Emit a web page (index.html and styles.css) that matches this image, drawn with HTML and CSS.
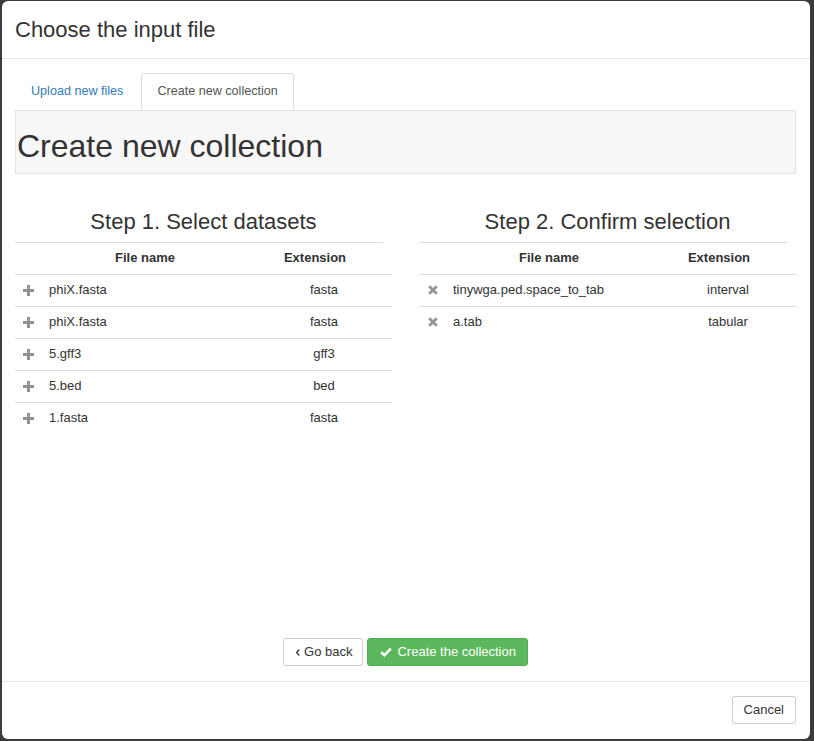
FILE: index.html
```html
<!DOCTYPE html>
<html>
<head>
<meta charset="utf-8">
<link rel="stylesheet" href="styles.css">
</head>
<body>
<div class="modal">
  <div class="modal-header">
    <h4 class="modal-title">Choose the input file</h4>
  </div>
  <div class="modal-body">
    <ul class="tabs">
      <li class="tab"><a class="tab-link">Upload new files</a></li>
      <li class="tab active"><a class="tab-link">Create new collection</a></li>
    </ul>
    <div class="well">
      <h1 class="well-title">Create new collection</h1>
    </div>
    <div class="steps">
      <div class="step">
        <h3 class="step-title">Step 1. Select datasets</h3>
        <table class="tbl tbl-head">
          <colgroup><col class="c-icon"><col><col class="c-ext"></colgroup>
          <tr><th></th><th>File name</th><th>Extension</th></tr>
        </table>
        <table class="tbl tbl-body">
          <colgroup><col class="c-icon"><col><col class="c-ext"></colgroup>
          <tr><td class="ic"><svg class="ico" width="11" height="11" viewBox="0 0 11 11"><rect x="4" y="0" width="3" height="11"/><rect x="0" y="4" width="11" height="3"/></svg></td><td>phiX.fasta</td><td class="ext">fasta</td></tr>
          <tr><td class="ic"><svg class="ico" width="11" height="11" viewBox="0 0 11 11"><rect x="4" y="0" width="3" height="11"/><rect x="0" y="4" width="11" height="3"/></svg></td><td>phiX.fasta</td><td class="ext">fasta</td></tr>
          <tr><td class="ic"><svg class="ico" width="11" height="11" viewBox="0 0 11 11"><rect x="4" y="0" width="3" height="11"/><rect x="0" y="4" width="11" height="3"/></svg></td><td>5.gff3</td><td class="ext">gff3</td></tr>
          <tr><td class="ic"><svg class="ico" width="11" height="11" viewBox="0 0 11 11"><rect x="4" y="0" width="3" height="11"/><rect x="0" y="4" width="11" height="3"/></svg></td><td>5.bed</td><td class="ext">bed</td></tr>
          <tr><td class="ic"><svg class="ico" width="11" height="11" viewBox="0 0 11 11"><rect x="4" y="0" width="3" height="11"/><rect x="0" y="4" width="11" height="3"/></svg></td><td>1.fasta</td><td class="ext">fasta</td></tr>
        </table>
      </div>
      <div class="step">
        <h3 class="step-title">Step 2. Confirm selection</h3>
        <table class="tbl tbl-head">
          <colgroup><col class="c-icon"><col><col class="c-ext"></colgroup>
          <tr><th></th><th>File name</th><th>Extension</th></tr>
        </table>
        <table class="tbl tbl-body">
          <colgroup><col class="c-icon"><col><col class="c-ext"></colgroup>
          <tr><td class="ic ic-x"><svg class="ico-x" width="10" height="10" viewBox="0 0 10 10"><path d="M1.2 1.2 L8.8 8.8 M8.8 1.2 L1.2 8.8"/></svg></td><td>tinywga.ped.space_to_tab</td><td class="ext">interval</td></tr>
          <tr><td class="ic ic-x"><svg class="ico-x" width="10" height="10" viewBox="0 0 10 10"><path d="M1.2 1.2 L8.8 8.8 M8.8 1.2 L1.2 8.8"/></svg></td><td>a.tab</td><td class="ext">tabular</td></tr>
        </table>
      </div>
    </div>
    <div class="actions">
      <button class="btn btn-default btn-back"><svg class="chev" width="6" height="9" viewBox="0 0 6 9"><path d="M4.3 1.5 L1.6 4.5 L4.3 7.5"/></svg>Go back</button>
      <button class="btn btn-success"><svg class="check" width="12" height="10" viewBox="0 0 12 10"><path d="M1.2 5.2 L4.4 8.2 L10.8 1.6"/></svg>Create the collection</button>
    </div>
  </div>
  <div class="modal-footer">
    <button class="btn btn-default btn-cancel">Cancel</button>
  </div>
</div>
</body>
</html>
```

FILE: styles.css
```css
* { box-sizing: border-box; }
html, body { margin: 0; padding: 0; }
body {
  background: #3b3b3b;
  font-family: "Liberation Sans", Arial, sans-serif;
  font-size: 13px;
  color: #333;
  width: 814px;
  height: 741px;
  overflow: hidden;
}
.modal {
  margin: 1px 4px 0 2px;
  height: 738px;
  background: #fff;
  border-radius: 6px;
  display: flex;
  flex-direction: column;
  overflow: hidden;
}
.modal-header {
  padding: 15px 14px 15px 13px;
  border-bottom: 1px solid #e5e5e5;
}
.modal-title {
  margin: 0;
  font-size: 22px;
  font-weight: normal;
  line-height: 27px;
  color: #333;
}
.modal-body {
  flex: 1;
  display: flex;
  flex-direction: column;
  padding: 14px 14px 15px 13px;
}
.tabs {
  list-style: none;
  margin: 0;
  padding: 0;
  display: flex;
}
.tab { margin-right: 2px; }
.tab-link {
  display: block;
  padding: 9px 15px 11px;
  font-size: 12.6px;
  line-height: 16px;
  border: 1px solid transparent;
  border-bottom: 0;
  border-radius: 4px 4px 0 0;
  color: #337ab7;
  cursor: pointer;
}
.tab.active .tab-link {
  color: #555;
  border-color: #ddd;
  background: #fff;
}
.well {
  background: #f7f7f7;
  border: 1px solid #e3e3e3;
  padding: 0 1px;
}
.well-title {
  margin: 0;
  font-size: 32px;
  font-weight: normal;
  line-height: 35px;
  padding: 18px 0 9px;
  color: #333;
}
.steps {
  display: grid;
  grid-template-columns: 377px 377px;
  column-gap: 27px;
}
.step-title {
  margin: 36px 0 8px;
  font-size: 22px;
  font-weight: normal;
  line-height: 24px;
  text-align: center;
  color: #333;
}
.tbl {
  border-collapse: collapse;
  table-layout: fixed;
}
.tbl-head { width: 368px; }
.tbl-body { width: 377px; }
.c-icon { width: 28px; }
.c-ext { width: 136px; }
.tbl th, .tbl td {
  border-top: 1px solid #ddd;
  padding: 6px 6px 7px;
  line-height: 18px;
  height: 32px;
  white-space: nowrap;
}
.tbl th {
  height: 31px;
  font-weight: bold;
  text-align: center;
}
.tbl td.ext { text-align: center; }
.tbl td.ic { padding-left: 8px; padding-right: 0; }
.tbl td.ic-x { padding-left: 9px; }
.ico { display: block; fill: #939393; }
.ico-x { display: block; fill: none; stroke: #959595; stroke-width: 2.8; }
.actions {
  margin-top: auto;
  display: flex;
  justify-content: center;
  gap: 4px;
}
.btn {
  font-family: "Liberation Sans", Arial, sans-serif;
  font-size: 13px;
  line-height: 18px;
  padding: 4px 10px;
  border: 1px solid #ccc;
  border-radius: 3px;
  background: #fff;
  color: #333;
  display: inline-flex;
  align-items: center;
  margin: 0;
}
.btn-back { padding-left: 11px; }
.btn-cancel { padding: 4px 11px; }
.btn-success {
  background: #5cb85c;
  border-color: #4cae4c;
  color: #fff;
  padding: 4px 11px 4px 12px;
}
.chev { fill: none; stroke: #333; stroke-width: 1.3; margin-right: 3px; }
.check { fill: none; stroke: #fff; stroke-width: 2.6; margin-right: 5px; }
.modal-footer {
  border-top: 1px solid #e5e5e5;
  padding: 14px 14px 15px;
  display: flex;
  justify-content: flex-end;
}
```
